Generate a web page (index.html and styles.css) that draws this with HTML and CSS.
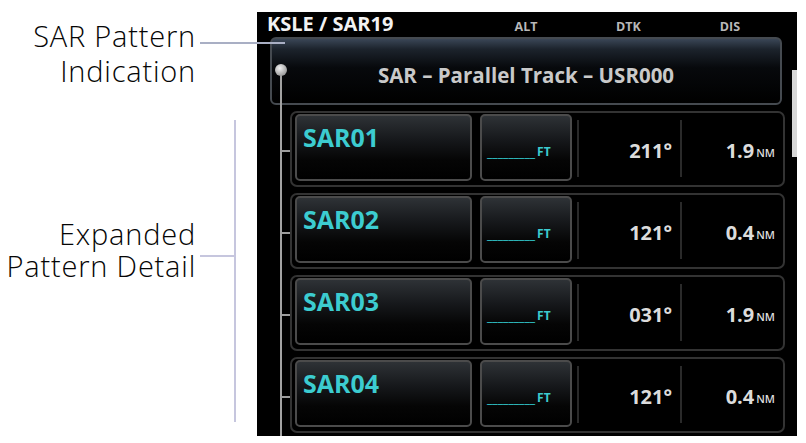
FILE: index.html
```html
<!DOCTYPE html>
<html lang="en">
<head>
<meta charset="utf-8">
<title>SAR Pattern</title>
<link rel="stylesheet" href="styles.css">
</head>
<body>
<div class="page">
  <div class="notes">
    <div class="callout-top">
      <div class="note-text">SAR Pattern
Indication</div>
      <div class="leader"></div>
    </div>
    <div class="bracket">
      <div class="bracket-inner">
        <div class="note-text">Expanded
Pattern Detail</div>
        <div class="tick"></div>
      </div>
    </div>
  </div>
  <div class="screen">
    <div class="main">
      <div class="header">
        <div class="route">KSLE / SAR19</div>
        <div class="col-label col-alt">ALT</div>
        <div class="col-label col-dtk">DTK</div>
        <div class="col-label col-dis">DIS</div>
      </div>
      <div class="pattern">SAR – Parallel Track – USR000</div>
      <div class="legs">
        <div class="leg">
          <div class="btn name">SAR01</div>
          <div class="btn alt-btn"><span class="dashes">_________</span><span class="ft">FT</span></div>
          <div class="cell dtk-cell"><span class="val">211°</span></div>
          <div class="cell dis-cell"><span class="val">1.9</span><span class="unit">NM</span></div>
        </div>
        <div class="leg">
          <div class="btn name">SAR02</div>
          <div class="btn alt-btn"><span class="dashes">_________</span><span class="ft">FT</span></div>
          <div class="cell dtk-cell"><span class="val">121°</span></div>
          <div class="cell dis-cell"><span class="val">0.4</span><span class="unit">NM</span></div>
        </div>
        <div class="leg">
          <div class="btn name">SAR03</div>
          <div class="btn alt-btn"><span class="dashes">_________</span><span class="ft">FT</span></div>
          <div class="cell dtk-cell"><span class="val">031°</span></div>
          <div class="cell dis-cell"><span class="val">1.9</span><span class="unit">NM</span></div>
        </div>
        <div class="leg">
          <div class="btn name">SAR04</div>
          <div class="btn alt-btn"><span class="dashes">_________</span><span class="ft">FT</span></div>
          <div class="cell dtk-cell"><span class="val">121°</span></div>
          <div class="cell dis-cell"><span class="val">0.4</span><span class="unit">NM</span></div>
        </div>
      </div>
    </div>
    <div class="track"><div class="thumb"></div></div>
    <div class="rail"><div class="dot"></div></div>
  </div>
</div>
</body>
</html>
```
FILE: styles.css
```css
html, body {
  margin: 0;
  background: #ffffff;
}

.page {
  display: flex;
  width: 806px;
  height: 443px;
  overflow: hidden;
  font-family: "Open Sans", "Liberation Sans", sans-serif;
}

/* ---------- annotations ---------- */
.notes {
  width: 257px;
  flex: none;
  display: flex;
  flex-direction: column;
}

.note-text {
  width: 196px;
  flex: none;
  text-align: right;
  white-space: pre-line;
  font-weight: 300;
  font-size: 29px;
  letter-spacing: 0.8px;
  color: #050505;
}

.callout-top {
  display: flex;
  margin-top: 18px;
  line-height: 35px;
}

.leader {
  flex: none;
  width: 85px;
  height: 2px;
  margin: 24px 0 0 4px;
  background: #a9afc4;
  position: relative;
  z-index: 3;
}

.bracket {
  margin-top: 32px;
  width: 236px;
  height: 302px;
  box-sizing: border-box;
  border-right: 2px solid #c6c6de;
  padding-top: 98px;
}

.bracket-inner {
  display: flex;
  line-height: 32px;
}

.tick {
  flex: 1;
  height: 2px;
  margin: 37px 0 0 4px;
  background: #c6c6de;
}

/* ---------- screen ---------- */
.screen {
  position: relative;
  flex: none;
  margin-top: 12px;
  width: 540px;
  height: 424px;
  background: #000;
  display: flex;
}

.main {
  width: 535px;
  display: flex;
  flex-direction: column;
}

.header {
  display: flex;
  align-items: center;
  height: 24px;
  padding-left: 10px;
}

.route {
  width: 213px;
  font-size: 20px;
  font-weight: 700;
  line-height: 24px;
  color: #f2f2f2;
}

.col-label {
  font-size: 12.5px;
  font-weight: 700;
  color: #b8b8b8;
  text-align: center;
  padding-top: 4px;
}

.col-alt { width: 92px; margin-right: 5px; }
.col-dtk { width: 103px; }
.col-dis { width: 100px; }

.pattern {
  margin: 1px 10px 0 13px;
  height: 68px;
  box-sizing: border-box;
  border: 2px solid #454a50;
  border-radius: 6px;
  background: linear-gradient(180deg, #3a4656 0%, #1c232c 16%, #07090c 45%, #000 100%);
  display: flex;
  align-items: center;
  justify-content: center;
  padding-top: 8px;
  font-size: 20.5px;
  font-weight: 700;
  color: #c9c9c9;
}

.legs {
  margin: 6px 7px 0 33px;
  display: flex;
  flex-direction: column;
  gap: 6px;
}

.leg {
  position: relative;
  height: 76px;
  box-sizing: border-box;
  border: 2px solid #333;
  border-radius: 7px;
  padding: 1px 3px 4px 3px;
  display: flex;
}

.leg::before {
  content: "";
  position: absolute;
  left: -12px;
  top: 37px;
  width: 10px;
  height: 2px;
  background: #9e9e9e;
}

.btn {
  box-sizing: border-box;
  border: 2px solid #4b4b4b;
  border-radius: 5px;
  background: linear-gradient(180deg, #2e3236 0%, #16181b 38%, #050505 70%, #000 100%);
}

.name {
  width: 177px;
  padding: 6px 0 0 6px;
  font-size: 25px;
  font-weight: 700;
  line-height: 30px;
  color: #3cccd0;
}

.alt-btn {
  width: 92px;
  margin-left: 8px;
  display: flex;
  align-items: center;
  padding: 8px 0 0 5px;
}

.dashes {
  font-size: 13px;
  font-weight: 700;
  color: #2fbfc2;
}

.ft {
  font-size: 12px;
  font-weight: 700;
  color: #3cccd0;
  margin-left: 2px;
}

.cell {
  display: flex;
  align-items: center;
  justify-content: flex-end;
  box-sizing: border-box;
  border-left: 2px solid #2a2a2a;
  margin: 6px 0 4px;
  padding-top: 4px;
}

.dtk-cell {
  width: 103px;
  margin-left: 5px;
  padding-right: 8px;
}

.dis-cell {
  flex: 1;
  padding-right: 5px;
}

.val {
  font-size: 20px;
  font-weight: 700;
  color: #dcdcdc;
}

.unit {
  font-size: 11px;
  font-weight: 600;
  color: #dcdcdc;
  margin-left: 2px;
  padding-top: 3px;
}

.track {
  width: 5px;
  flex: none;
}

.thumb {
  margin-top: 58px;
  height: 87px;
  background: #d6d6d6;
}

.rail {
  position: absolute;
  left: 23px;
  top: 58px;
  bottom: 0;
  width: 2px;
  background: #a2a2a2;
  z-index: 2;
}

.dot {
  position: absolute;
  left: -5px;
  top: -6px;
  width: 12px;
  height: 12px;
  border-radius: 50%;
  background: radial-gradient(circle at 40% 35%, #f2f2f2 0%, #b0b0b0 55%, #7a7a7a 100%);
}
```
